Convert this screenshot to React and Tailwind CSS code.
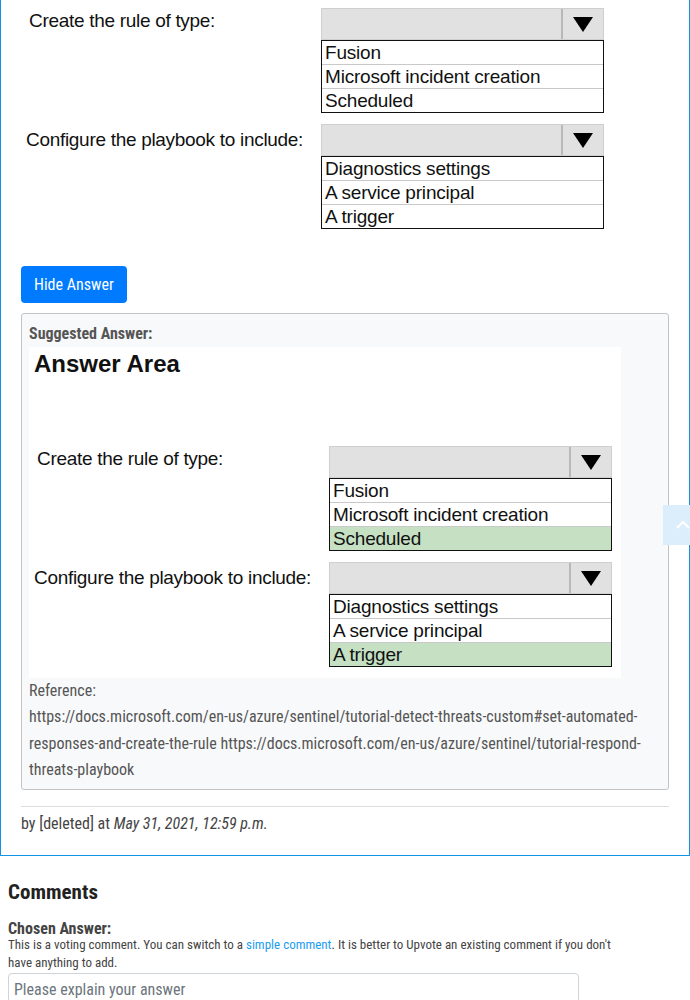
import React from "react";

const SITE = { fontFamily: "'Roboto Condensed', 'Liberation Sans Narrow', 'DejaVu Sans Condensed', Roboto, sans-serif" };
const IMG = { fontFamily: "'Liberation Sans', Arial, sans-serif" };

function Dropdown({ options, correct }) {
  return (
    <div className="w-[283px]">
      <div className="flex h-[32px] bg-[#e1e1e1] border border-[#cfcfcf]">
        <div className="flex-1" />
        <div className="w-[42px] border-l-2 border-[#b8b8b8] flex items-center justify-center">
          <svg width="22" height="18" viewBox="0 0 22 18">
            <polygon points="1,2 21,2 11,17" fill="#000" />
          </svg>
        </div>
      </div>
      <div className="h-[73px] flex flex-col border-[1.5px] border-[#111]">
        {options.map((o, i) => (
          <div
            key={o}
            className={
              "flex-1 min-h-0 flex items-center pl-[3px] text-[19px] leading-[20px] tracking-[-0.2px] text-[#111] " +
              (i < options.length - 1 ? "border-b border-[#c9c9c9] " : "") +
              (o === correct ? "bg-[#c5e0c3]" : "bg-white")
            }
          >
            {o}
          </div>
        ))}
      </div>
    </div>
  );
}

function Row({ label, pl, options, correct }) {
  return (
    <div className="flex items-start">
      <div className={"w-[300px] h-[32px] flex items-center whitespace-nowrap text-[19px] leading-[22px] tracking-[-0.3px] text-[#111] " + pl}>
        {label}
      </div>
      <Dropdown options={options} correct={correct} />
    </div>
  );
}

function QuestionBlock({ correct1, correct2 }) {
  return (
    <div style={IMG} className="flex flex-col gap-[11px]">
      <Row
        label="Create the rule of type:"
        pl="pl-[8px] -mt-[3px]"
        options={["Fusion", "Microsoft incident creation", "Scheduled"]}
        correct={correct1}
      />
      <Row
        label="Configure the playbook to include:"
        pl="pl-[5px]"
        options={["Diagnostics settings", "A service principal", "A trigger"]}
        correct={correct2}
      />
    </div>
  );
}

export default function App() {
  return (
    <div style={SITE} className="relative w-[690px] h-[1000px] overflow-hidden bg-white text-[#444]">
      <div className="border-x border-b border-[#1193e6] px-[20px] pt-[8px] pb-[20px]">
        <QuestionBlock />
        <button className="mt-[37px] h-[37px] px-[13px] rounded-[4px] bg-[#007bff] text-white text-[16px]">
          Hide Answer
        </button>
        <div className="mt-[10px] border border-[#c4c4c4] rounded-[3px] bg-[#f8f9fa] px-[7px] pt-[7px] pb-[6px]">
          <div className="text-[16px] font-bold text-[#555] leading-[26px]">Suggested Answer:</div>
          <div className="w-[592px] h-[331px] bg-white pt-[4px]">
            <div className="pl-[5px] text-[24px] font-bold text-[#111] leading-[26px]" style={IMG}>
              Answer Area
            </div>
            <div className="mt-[69px]">
              <QuestionBlock correct1="Scheduled" correct2="A trigger" />
            </div>
          </div>
          <div className="text-[16px] leading-[26.3px] text-[#555]">
            <div>Reference:</div>
            <div>
              https://docs.microsoft.com/en-us/azure/sentinel/tutorial-detect-threats-custom#set-automated-responses-and-create-the-rule https://docs.microsoft.com/en-us/azure/sentinel/tutorial-respond-threats-playbook
            </div>
          </div>
        </div>
        <div className="mt-[16px] border-t border-[#dddddd] pt-[6px] text-[16px] leading-[22px] text-[#444]">
          by [deleted] at <span className="italic">May 31, 2021, 12:59 p.m.</span>
        </div>
      </div>

      <div className="px-[8px] pt-[23px]">
        <div className="text-[21px] font-bold text-[#222] leading-[26px]">Comments</div>
        <div className="mt-[17px] text-[16px] font-bold text-[#444] leading-[14px]">Chosen Answer:</div>
        <p className="text-[13px] leading-[18px] text-[#444]">
          This is a voting comment. You can switch to a <span className="text-[#1a9cf0]">simple comment</span>. It is better to Upvote an existing comment if you don't
          <br />
          have anything to add.
        </p>
        <div className="mt-[1px] w-[571px] h-[40px] border border-[#ced4da] rounded-[4px] px-[5px] pt-[4px] text-[16px] text-[#6c757d]">
          Please explain your answer
        </div>
      </div>

      <div className="absolute left-[663px] top-[505px] w-[40px] h-[40px] bg-[#dcedfb] flex items-center justify-start pl-[13px]">
        <svg width="14" height="10" viewBox="0 0 14 10">
          <polyline points="1,8 7,2 13,8" fill="none" stroke="#fff" strokeWidth="2" />
        </svg>
      </div>
    </div>
  );
}
